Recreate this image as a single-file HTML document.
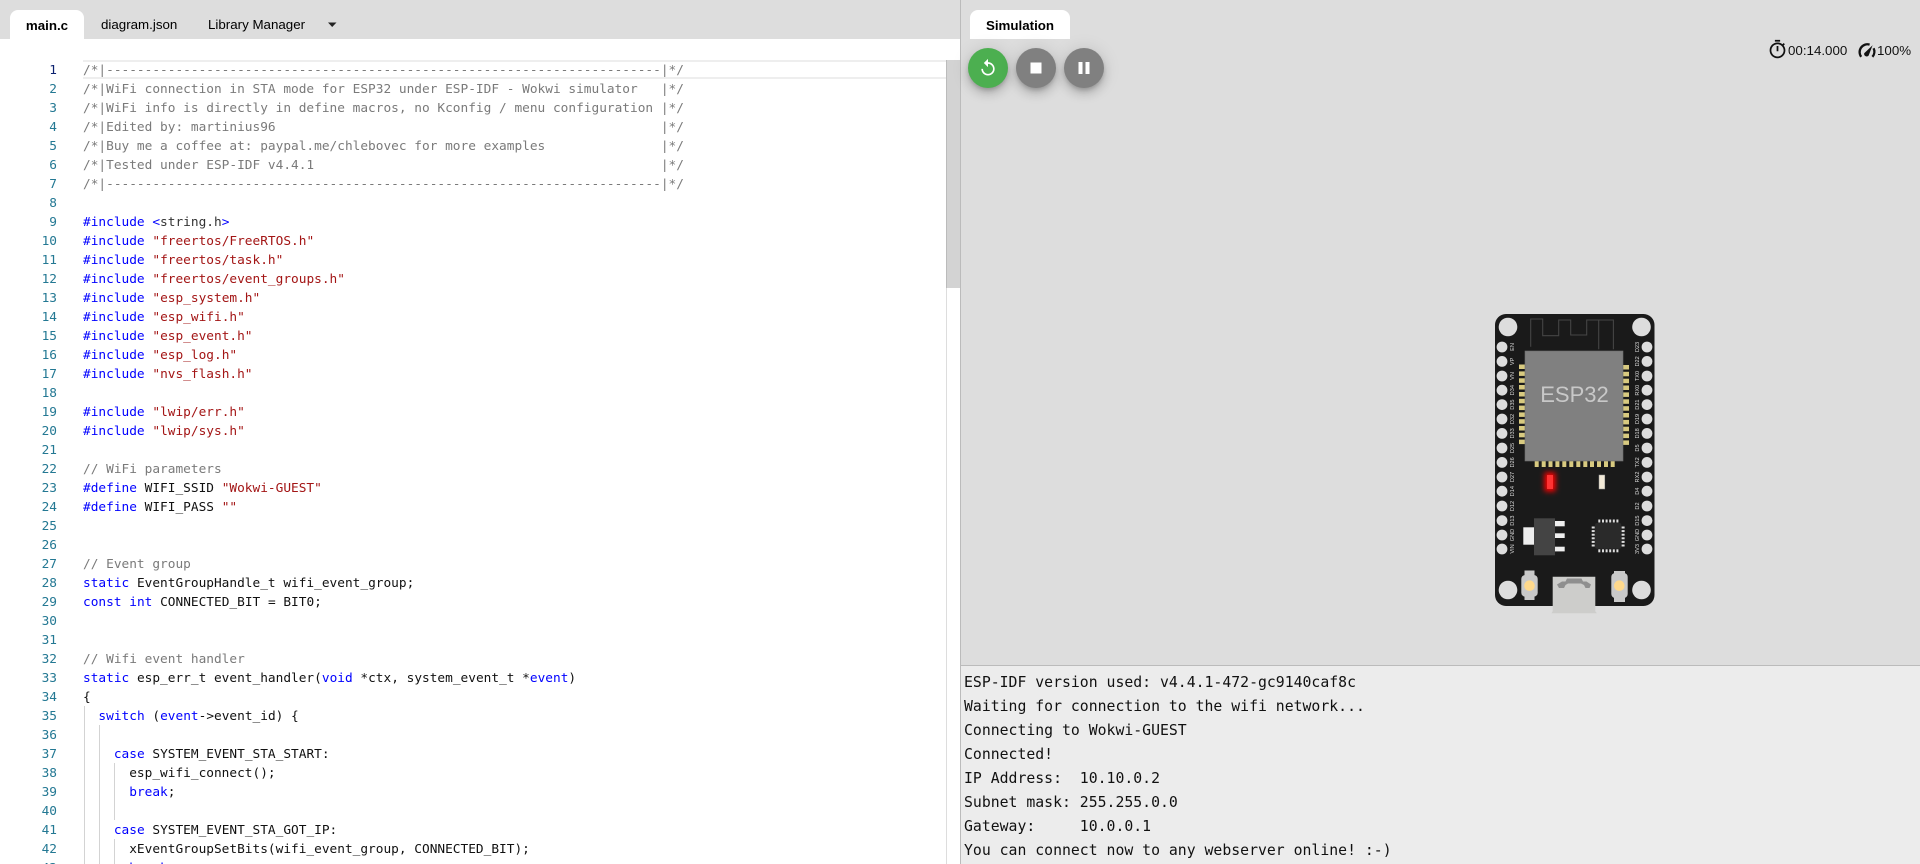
<!DOCTYPE html>
<html><head><meta charset="utf-8"><title>Wokwi</title>
<style>
html,body{margin:0;padding:0;width:1920px;height:864px;overflow:hidden;background:#fff}
body{position:relative;font-family:"Liberation Sans",sans-serif;color:#000}
.abs{position:absolute}
.tabbar{left:0;top:0;width:960px;height:39px;background:#ddd}
.tab{position:absolute;font-size:13.33px;line-height:16px;white-space:nowrap}
.act{background:#fff;border-radius:8px 8px 0 0;height:29px;top:10px;text-align:center;font-weight:bold;line-height:31px;font-size:13.33px;position:absolute}
.nums{left:0;top:61px;width:57px;text-align:right;font:12.8px/19px "DejaVu Sans Mono",monospace;color:#237893;white-space:pre}
.code{left:83px;top:61px;font:12.8px/19px "DejaVu Sans Mono",monospace;white-space:pre;color:#111}
.k{color:#00f}.s{color:#a31515}.c{color:#7a7a7a}.p{color:#333}
.right{left:960px;top:0;width:960px;height:864px;background:#ddd;border-left:1px solid #bbb;box-sizing:border-box}
.fab{position:absolute;top:48px;width:40px;height:40px;border-radius:50%;background:#808080;box-shadow:0 3px 5px -1px rgba(0,0,0,.2),0 6px 10px 0 rgba(0,0,0,.14),0 1px 18px 0 rgba(0,0,0,.12)}
.fab svg{position:absolute;fill:#fff}
.stat{font-size:13.33px;line-height:16px;top:43px;color:#111}
.serial{left:961px;top:665px;width:959px;height:199px;background:#ececec;border-top:1px solid #bbb;box-sizing:border-box;padding:5px 0 0 3px;font:14.8px/24px "DejaVu Sans Mono",monospace;white-space:pre;color:#111}
</style></head><body>
<div class="abs tabbar">
<div class="act" style="left:10px;width:74px">main.c</div>
<div class="tab" style="left:101px;top:17px">diagram.json</div>
<div class="tab" style="left:208px;top:17px">Library Manager</div>
<svg class="abs" style="left:328px;top:22px" width="9" height="6"><path d="M0 0.5h8.5L4.2 5z" fill="#222"/></svg>
</div>

<div class="abs" style="left:83px;top:60px;width:877px;height:19px;border-top:2px solid #eee;border-bottom:2px solid #eee;box-sizing:border-box"></div>
<div class="abs" style="left:84px;top:706px;width:1px;height:158px;background:#d3d3d3"></div>
<div class="abs" style="left:99px;top:725px;width:1px;height:139px;background:#d3d3d3"></div>
<div class="abs" style="left:114px;top:763px;width:1px;height:57px;background:#d3d3d3"></div>
<div class="abs" style="left:114px;top:839px;width:1px;height:25px;background:#d3d3d3"></div>
<div class="abs" style="left:946px;top:60px;width:1px;height:804px;background:#ddd"></div>
<div class="abs" style="left:946px;top:60px;width:14px;height:228px;background:#d3d3d3;border-left:1px solid #bbb;box-sizing:border-box"></div>

<div class="abs nums"><span style="color:#0b216f">1</span>
2
3
4
5
6
7
8
9
10
11
12
13
14
15
16
17
18
19
20
21
22
23
24
25
26
27
28
29
30
31
32
33
34
35
36
37
38
39
40
41
42
43</div>
<div class="abs code"><span class="c">/*|------------------------------------------------------------------------|*/
/*|WiFi connection in STA mode for ESP32 under ESP-IDF - Wokwi simulator   |*/
/*|WiFi info is directly in define macros, no Kconfig / menu configuration |*/
/*|Edited by: martinius96                                                  |*/
/*|Buy me a coffee at: paypal.me/chlebovec for more examples               |*/
/*|Tested under ESP-IDF v4.4.1                                             |*/
/*|------------------------------------------------------------------------|*/</span>

<span class="k">#include &lt;</span><span class="p">string.h</span><span class="k">&gt;</span>
<span class="k">#include</span> <span class="s">"freertos/FreeRTOS.h"</span>
<span class="k">#include</span> <span class="s">"freertos/task.h"</span>
<span class="k">#include</span> <span class="s">"freertos/event_groups.h"</span>
<span class="k">#include</span> <span class="s">"esp_system.h"</span>
<span class="k">#include</span> <span class="s">"esp_wifi.h"</span>
<span class="k">#include</span> <span class="s">"esp_event.h"</span>
<span class="k">#include</span> <span class="s">"esp_log.h"</span>
<span class="k">#include</span> <span class="s">"nvs_flash.h"</span>

<span class="k">#include</span> <span class="s">"lwip/err.h"</span>
<span class="k">#include</span> <span class="s">"lwip/sys.h"</span>

<span class="c">// WiFi parameters</span>
<span class="k">#define</span> WIFI_SSID <span class="s">"Wokwi-GUEST"</span>
<span class="k">#define</span> WIFI_PASS <span class="s">""</span>


<span class="c">// Event group</span>
<span class="k">static</span> EventGroupHandle_t wifi_event_group;
<span class="k">const</span> <span class="k">int</span> CONNECTED_BIT = BIT0;


<span class="c">// Wifi event handler</span>
<span class="k">static</span> esp_err_t event_handler(<span class="k">void</span> *ctx, system_event_t *<span class="k">event</span>)
{
  <span class="k">switch</span> (<span class="k">event</span>-&gt;event_id) {

    <span class="k">case</span> SYSTEM_EVENT_STA_START:
      esp_wifi_connect();
      <span class="k">break</span>;

    <span class="k">case</span> SYSTEM_EVENT_STA_GOT_IP:
      xEventGroupSetBits(wifi_event_group, CONNECTED_BIT);
      <span class="k">break</span>;</div>

<div class="abs right"></div>
<div class="act" style="left:970px;width:100px">Simulation</div>
<div class="fab" style="left:968px;background:#4caf50"><svg style="left:10px;top:10px" width="20" height="20" viewBox="0 0 24 24"><path d="M12 5V1L7 6l5 5V7c3.31 0 6 2.69 6 6s-2.69 6-6 6-6-2.69-6-6H4c0 4.42 3.58 8 8 8s8-3.58 8-8-3.58-8-8-8z"/></svg></div>
<div class="fab" style="left:1016px"><svg style="left:8px;top:8px" width="24" height="24" viewBox="0 0 24 24"><path d="M6.5 6.5h11v11h-11z"/></svg></div>
<div class="fab" style="left:1064px"><svg style="left:8px;top:8px" width="24" height="24" viewBox="0 0 24 24"><path d="M6.5 6h4v12h-4zM13.5 6h4v12h-4z"/></svg></div>

<svg class="abs" style="left:1767px;top:39px" width="21" height="21" viewBox="0 0 24 24" fill="#111"><path d="M15 1H9v2h6V1zm-4 13h2V8h-2v6zm8.03-6.61l1.42-1.42c-.43-.51-.9-.99-1.41-1.41l-1.42 1.42C16.07 4.74 14.12 4 12 4c-4.97 0-9 4.03-9 9s4.02 9 9 9 9-4.03 9-9c0-2.12-.74-4.07-1.97-5.61zM12 20c-3.87 0-7-3.13-7-7s3.13-7 7-7 7 3.13 7 7-3.13 7-7 7z"/></svg>
<div class="abs stat" style="left:1788px">00:14.000</div>
<svg class="abs" style="left:1856px;top:40px" width="21" height="21"><path d="M5.2 16.8A7.8 7.8 0 0 1 13.6 4.6" fill="none" stroke="#111" stroke-width="2.3"/><path d="M17.6 8.2A7.8 7.8 0 0 1 16.4 16.8" fill="none" stroke="#111" stroke-width="2.3"/><path d="M8.2 13.2L16.6 5.2L12.6 15.6a2.6 2.6 0 0 1-4.4-2.4z" fill="#111"/></svg>
<div class="abs stat" style="left:1877px">100%</div>

<svg class="abs" style="left:1480px;top:300px" width="200" height="320" viewBox="0 0 200 320">
<defs><filter id="b" x="-150%" y="-100%" width="400%" height="300%"><feGaussianBlur stdDeviation="2.6"/></filter></defs>
<rect x="15" y="14" width="159.5" height="292" rx="11" fill="#1a1a1a"/>
<g fill="#ddd"><circle cx="28" cy="27" r="9.3"/><circle cx="161.5" cy="27" r="9.3"/><circle cx="28" cy="290" r="9.3"/><circle cx="161.5" cy="290" r="9.3"/></g>
<g fill="#ddd">
<circle cx="22" cy="47" r="5.4"/><circle cx="22" cy="61.4" r="5.4"/><circle cx="22" cy="76" r="5.4"/><circle cx="22" cy="90.2" r="5.4"/><circle cx="22" cy="104.6" r="5.4"/><circle cx="22" cy="119" r="5.4"/><circle cx="22" cy="133.4" r="5.4"/><circle cx="22" cy="148" r="5.4"/><circle cx="22" cy="162.4" r="5.4"/><circle cx="22" cy="177" r="5.4"/><circle cx="22" cy="191.2" r="5.4"/><circle cx="22" cy="206" r="5.4"/><circle cx="22" cy="220.6" r="5.4"/><circle cx="22" cy="235" r="5.4"/><circle cx="22" cy="249" r="5.4"/>
<circle cx="167" cy="47" r="5.4"/><circle cx="167" cy="61.4" r="5.4"/><circle cx="167" cy="76" r="5.4"/><circle cx="167" cy="90.2" r="5.4"/><circle cx="167" cy="104.6" r="5.4"/><circle cx="167" cy="119" r="5.4"/><circle cx="167" cy="133.4" r="5.4"/><circle cx="167" cy="148" r="5.4"/><circle cx="167" cy="162.4" r="5.4"/><circle cx="167" cy="177" r="5.4"/><circle cx="167" cy="191.2" r="5.4"/><circle cx="167" cy="206" r="5.4"/><circle cx="167" cy="220.6" r="5.4"/><circle cx="167" cy="235" r="5.4"/><circle cx="167" cy="249" r="5.4"/>
</g>
<path d="M50.7 46.7V19h12v16.7h16V20h12v15h16V20h26.7v29.3M118.7 20v29.3" fill="none" stroke="#454545" stroke-width="1.1"/>
<g font-family="'Liberation Sans',sans-serif" font-size="5.6" fill="#ddd" text-anchor="middle">
<text transform="translate(34,47) rotate(-90)">EN</text>
<text transform="translate(34,61.4) rotate(-90)">VP</text>
<text transform="translate(34,76) rotate(-90)">VN</text>
<text transform="translate(34,90.2) rotate(-90)">D34</text>
<text transform="translate(34,104.6) rotate(-90)">D35</text>
<text transform="translate(34,119) rotate(-90)">D32</text>
<text transform="translate(34,133.4) rotate(-90)">D33</text>
<text transform="translate(34,148) rotate(-90)">D25</text>
<text transform="translate(34,162.4) rotate(-90)">D26</text>
<text transform="translate(34,177) rotate(-90)">D27</text>
<text transform="translate(34,191.2) rotate(-90)">D14</text>
<text transform="translate(34,206) rotate(-90)">D12</text>
<text transform="translate(34,220.6) rotate(-90)">D13</text>
<text transform="translate(34,235) rotate(-90)">GND</text>
<text transform="translate(34,249) rotate(-90)">VIN</text>
<text transform="translate(159,47) rotate(-90)">D23</text>
<text transform="translate(159,61.4) rotate(-90)">D22</text>
<text transform="translate(159,76) rotate(-90)">TX0</text>
<text transform="translate(159,90.2) rotate(-90)">RX0</text>
<text transform="translate(159,104.6) rotate(-90)">D21</text>
<text transform="translate(159,119) rotate(-90)">D19</text>
<text transform="translate(159,133.4) rotate(-90)">D18</text>
<text transform="translate(159,148) rotate(-90)">D5</text>
<text transform="translate(159,162.4) rotate(-90)">TX2</text>
<text transform="translate(159,177) rotate(-90)">RX2</text>
<text transform="translate(159,191.2) rotate(-90)">D4</text>
<text transform="translate(159,206) rotate(-90)">D2</text>
<text transform="translate(159,220.6) rotate(-90)">D15</text>
<text transform="translate(159,235) rotate(-90)">GND</text>
<text transform="translate(159,249) rotate(-90)">3V3</text>
</g>
<g fill="#d8ca80">
<rect x="39" y="64.5" width="6" height="4.5"/><rect x="39" y="71.4" width="6" height="4.5"/><rect x="39" y="78.3" width="6" height="4.5"/><rect x="39" y="85" width="6" height="4.5"/><rect x="39" y="92" width="6" height="4.5"/><rect x="39" y="98.8" width="6" height="4.5"/><rect x="39" y="105.6" width="6" height="4.5"/><rect x="39" y="112.4" width="6" height="4.5"/><rect x="39" y="119.2" width="6" height="4.5"/><rect x="39" y="126" width="6" height="4.5"/><rect x="39" y="132.8" width="6" height="4.5"/><rect x="39" y="139.6" width="6" height="4.5"/>
<rect x="143" y="65" width="6" height="4.5"/><rect x="143" y="71.8" width="6" height="4.5"/><rect x="143" y="78.7" width="6" height="4.5"/><rect x="143" y="85.5" width="6" height="4.5"/><rect x="143" y="92.4" width="6" height="4.5"/><rect x="143" y="99.3" width="6" height="4.5"/><rect x="143" y="106.2" width="6" height="4.5"/><rect x="143" y="113" width="6" height="4.5"/><rect x="143" y="119.9" width="6" height="4.5"/><rect x="143" y="126.7" width="6" height="4.5"/><rect x="143" y="133.6" width="6" height="4.5"/><rect x="143" y="140.4" width="6" height="4.5"/>
<rect x="54.7" y="161" width="4" height="6"/><rect x="61.7" y="161" width="4" height="6"/><rect x="68.5" y="161" width="4" height="6"/><rect x="75.4" y="161" width="4" height="6"/><rect x="82.3" y="161" width="4" height="6"/><rect x="89.3" y="161" width="4" height="6"/><rect x="96.3" y="161" width="4" height="6"/><rect x="103.3" y="161" width="4" height="6"/><rect x="110" y="161" width="4" height="6"/><rect x="117" y="161" width="4" height="6"/><rect x="124" y="161" width="4" height="6"/><rect x="130.7" y="161" width="4" height="6"/>
</g>
<rect x="45" y="51" width="98" height="110" fill="#808080" stroke="#6e6e6e" stroke-width=".6"/>
<text x="94.5" y="102" font-family="'Liberation Sans',sans-serif" font-size="22" fill="#c8c8c8" text-anchor="middle">ESP32</text>
<rect x="64.5" y="172.5" width="11" height="19" fill="#f00" filter="url(#b)"/>
<rect x="67" y="175" width="6" height="14" fill="#f33"/>
<rect x="119" y="175" width="5.8" height="14" fill="#f3ead8" stroke="#999" stroke-width=".5"/>
<rect x="43.3" y="227.3" width="10.7" height="17.4" fill="#eee"/>
<rect x="54" y="218.3" width="21" height="37" fill="#444"/>
<g fill="#eee"><rect x="75" y="221" width="9.7" height="5.3"/><rect x="75" y="233.3" width="9.7" height="4.7"/><rect x="75" y="246.7" width="9.7" height="4.7"/></g>
<rect x="115" y="223" width="26.3" height="25.7" rx="2" fill="#2a2a2a"/>
<g fill="#ddd">
<rect x="118.3" y="219.5" width="2" height="3"/><rect x="122" y="219.5" width="2" height="3"/><rect x="125.6" y="219.5" width="2" height="3"/><rect x="129.2" y="219.5" width="2" height="3"/><rect x="132.8" y="219.5" width="2" height="3"/><rect x="136.4" y="219.5" width="2" height="3"/>
<rect x="118.3" y="249.3" width="2" height="3"/><rect x="122" y="249.3" width="2" height="3"/><rect x="125.6" y="249.3" width="2" height="3"/><rect x="129.2" y="249.3" width="2" height="3"/><rect x="132.8" y="249.3" width="2" height="3"/><rect x="136.4" y="249.3" width="2" height="3"/>
<rect x="111.7" y="226.5" width="3" height="2"/><rect x="111.7" y="230.1" width="3" height="2"/><rect x="111.7" y="233.7" width="3" height="2"/><rect x="111.7" y="237.3" width="3" height="2"/><rect x="111.7" y="240.9" width="3" height="2"/><rect x="111.7" y="244.5" width="3" height="2"/>
<rect x="141.6" y="226.5" width="3" height="2"/><rect x="141.6" y="230.1" width="3" height="2"/><rect x="141.6" y="233.7" width="3" height="2"/><rect x="141.6" y="237.3" width="3" height="2"/><rect x="141.6" y="240.9" width="3" height="2"/><rect x="141.6" y="244.5" width="3" height="2"/>
</g>
<g fill="#c9c9c9">
<rect x="41.3" y="275" width="16.4" height="21.7" rx="4"/><rect x="44.5" y="270.5" width="10" height="5"/><rect x="44.5" y="296" width="10" height="4"/>
<rect x="131.3" y="273" width="16.4" height="25" rx="4"/><rect x="134" y="271" width="11" height="4"/><rect x="134" y="297" width="11" height="5"/>
</g>
<circle cx="49.5" cy="285.7" r="5.3" fill="#ffd98c"/>
<circle cx="139.3" cy="285.7" r="5.3" fill="#ffd98c"/>
<path d="M72.7 276.7h42.6v34.5l1.5 2H71.5l1.2-2z" fill="#cdcdcb"/>
<path d="M77 284.5l5-3h3.5l1.5-3h14.5l1.5 3h3.5l4.5 3-1.5 3.5-4 0-1.5-3-3-1.5H88l-2.5 1.5-1.5 3h-5z" fill="#8f8f8f"/>
</svg>

<div class="abs serial">ESP-IDF version used: v4.4.1-472-gc9140caf8c
Waiting for connection to the wifi network...
Connecting to Wokwi-GUEST
Connected!
IP Address:  10.10.0.2
Subnet mask: 255.255.0.0
Gateway:     10.0.0.1
You can connect now to any webserver online! :-)</div>
</body></html>
